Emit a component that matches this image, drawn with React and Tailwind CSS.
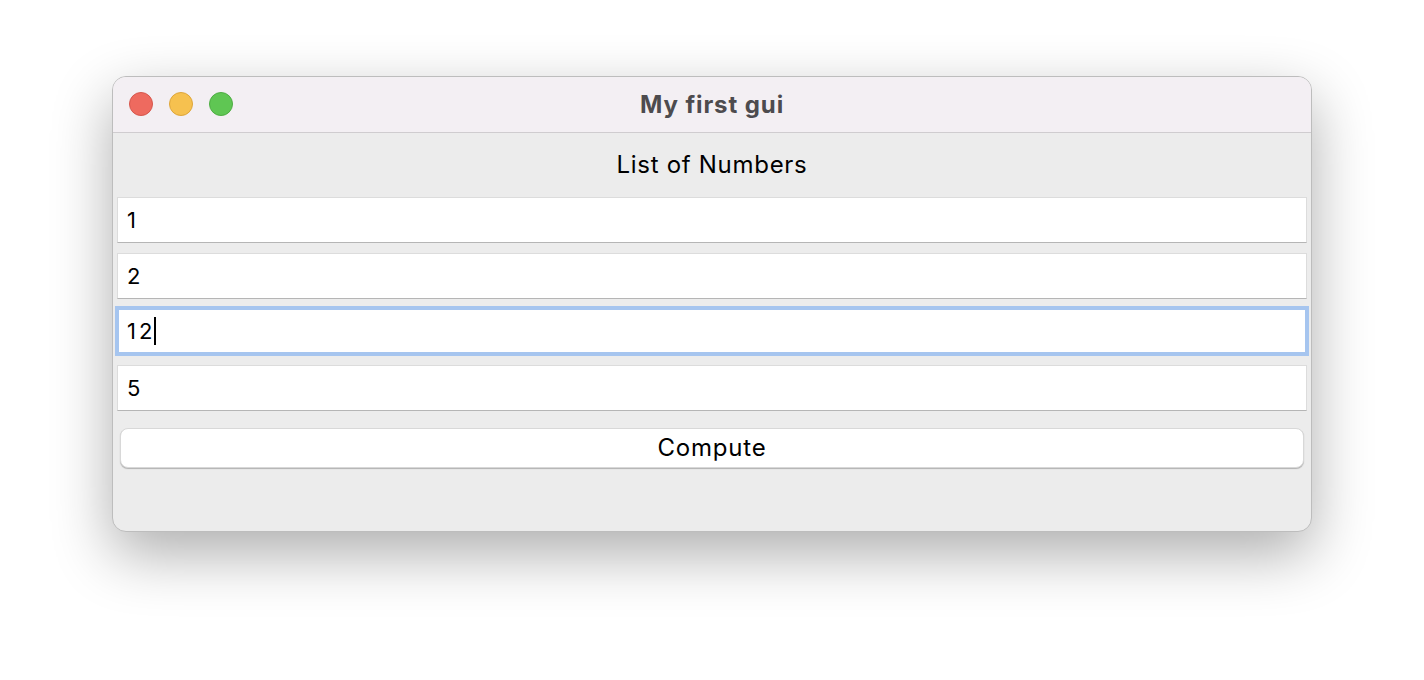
import React from "react";

const values = ["1", "2", "12", "5"];

function Entry({ value, focused }) {
  if (focused) {
    // focus ring around the active entry
    return (
      <div className="h-[50px] -mx-[2px] mt-[-3px] mb-[-1px] bg-white border-[4px] border-[#a6c5ef] flex items-center pl-[8px]">
        <span className="text-[22px] text-black leading-none tracking-[3px]">{value}</span>
        <span className="w-[2px] h-[28px] bg-black -ml-[1px]" />
      </div>
    );
  }
  return (
    <div className="h-[46px] bg-white border border-[#dcdcdc] border-b-[#b5b5b5] flex items-center pl-[9px]">
      <span className="text-[22px] text-black leading-none tracking-[3px]">{value}</span>
    </div>
  );
}

export default function App() {
  return (
    <div className="w-[1424px] h-[680px] bg-white pt-[76px] pl-[112px]" style={{ fontFamily: "Inter, 'Noto Sans', 'Liberation Sans', sans-serif" }}>
      <div className="w-[1200px] h-[456px] rounded-[14px] border border-[#bdbdbd] bg-[#ececec] overflow-hidden shadow-[0_22px_60px_rgba(0,0,0,0.32)] flex flex-col">
        {/* title bar */}
        <div className="h-[56px] bg-[#f3eff3] border-b border-[#cfcccf] relative flex items-center justify-center">
          <div className="absolute left-[16px] top-[15px] flex gap-[16px]">
            <span className="w-[24px] h-[24px] rounded-full bg-[#ee6a5f] border border-[#d6574d]" />
            <span className="w-[24px] h-[24px] rounded-full bg-[#f6c14f] border border-[#dea63a]" />
            <span className="w-[24px] h-[24px] rounded-full bg-[#5fc653] border border-[#4ead43]" />
          </div>
          <span className="text-[24px] font-bold text-[#4d4b4e] tracking-[0.9px]">My first gui</span>
        </div>

        {/* body */}
        <div className="px-[4px]">
          <div className="h-[64px] flex items-center justify-center">
            <span className="text-[24px] text-black tracking-[0.7px]">List of Numbers</span>
          </div>
          <div className="flex flex-col gap-[10px]">
            {values.map((v, i) => (
              <Entry key={i} value={v} focused={i === 2} />
            ))}
          </div>
          <div className="px-[3px] mt-[17px]">
            <button className="w-full h-[40px] bg-white rounded-[8px] border border-[#d8d8d8] shadow-[0_1px_1px_rgba(0,0,0,0.25)] text-[24px] text-black tracking-[0.8px]">
              Compute
            </button>
          </div>
        </div>
      </div>
    </div>
  );
}
